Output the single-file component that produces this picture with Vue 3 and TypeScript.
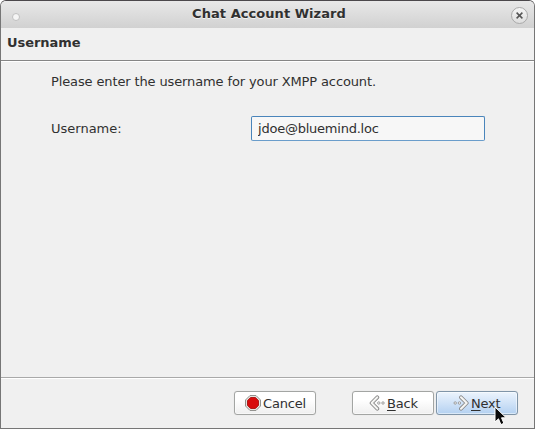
<script setup lang="ts">
import { ref } from 'vue'

const username = ref<string>('jdoe@bluemind.loc')
</script>

<template>
  <div class="window">
    <header class="titlebar">
      <span class="dot"></span>
      <span class="title">Chat Account Wizard</span>
      <button class="close" aria-label="Close">
        <svg width="9" height="9" viewBox="0 0 9 9"><path d="M1.6 1.6 7.4 7.4M7.4 1.6 1.6 7.4" stroke="#555" stroke-width="1.5" /></svg>
      </button>
    </header>
    <h1 class="heading">Username</h1>
    <main class="content">
      <p class="intro">Please enter the username for your XMPP account.</p>
      <div class="field">
        <label for="username">Username:</label>
        <input id="username" v-model="username" type="text" spellcheck="false" />
      </div>
    </main>
    <footer class="actions">
      <button class="btn cancel">
        <svg width="16" height="16" viewBox="0 0 16 16">
          <path d="M5 .5h6L15.5 5v6L11 15.5H5L.5 11V5z" fill="#e4e4e0" stroke="#93938f" />
          <path d="M5.6 2.5h4.8l3.1 3.1v4.8l-3.1 3.1H5.6l-3.1-3.1V5.6z" fill="#d80c0c" stroke="#a81010" stroke-width=".9" />
        </svg>
        <span class="label">Cancel</span>
      </button>
      <button class="btn back">
        <svg width="16" height="16" viewBox="0 0 16 16">
          <g fill="none" stroke-linecap="round" stroke-linejoin="round">
            <path d="M8.3 2.3 2.6 8l5.7 5.7" stroke="#858585" stroke-width="3.8" />
            <path d="M8.3 2.3 2.6 8l5.7 5.7" stroke="#f5f5f3" stroke-width="2" />
          </g>
          <g fill="#fff" stroke="#858585" stroke-width=".8"><circle cx="9.8" cy="8" r="1.2" /><circle cx="14" cy="8" r="1.2" /></g>
        </svg>
        <span class="label"><u>B</u>ack</span>
      </button>
      <button class="btn primary">
        <svg width="16" height="16" viewBox="0 0 16 16">
          <g fill="none" stroke-linecap="round" stroke-linejoin="round">
            <path d="M8 2.3 13.7 8 8 13.7" stroke="#858585" stroke-width="3.8" />
            <path d="M8 2.3 13.7 8 8 13.7" stroke="#f5f5f3" stroke-width="2.2" />
          </g>
          <g fill="#fff" stroke="#858585" stroke-width=".8"><circle cx="2.2" cy="8" r="1.2" /><circle cx="6.4" cy="8" r="1.2" /></g>
        </svg>
        <span class="label"><u>N</u>ext</span>
        <svg class="pointer" width="14" height="20" viewBox="0 0 14 20">
          <path d="M1 1v15l3.5-3.2 2.4 5.8 3-1.3-2.4-5.5h4.7z" fill="#0a0a0a" stroke="#fff" stroke-width="1" />
        </svg>
      </button>
    </footer>
  </div>
</template>

<style>
body {
  margin: 0;
  background: #fff;
}
</style>

<style scoped>
.window {
  box-sizing: border-box;
  width: 535px;
  height: 429px;
  display: flex;
  flex-direction: column;
  border: 1px solid #767676;
  border-top-color: #4b484b;
  border-radius: 6px 6px 0 0;
  background: #f0f0f0;
  color: #303030;
  font: 13px/16px "DejaVu Sans", sans-serif;
}
.titlebar {
  display: grid;
  grid-template-columns: 28px 1fr 25px;
  align-items: center;
  height: 27px;
  flex: none;
  border-radius: 5px 5px 0 0;
  background: linear-gradient(#e8e8e8, #d1d1d1);
}
.dot {
  box-sizing: border-box;
  width: 8px;
  height: 8px;
  margin: 4px 0 0 11px;
  border: 1px solid #c0c0c0;
  border-radius: 50%;
  background: #f5f5f5;
}
.title {
  text-align: center;
  font-weight: bold;
  letter-spacing: 0.05px;
  margin-top: -2px;
  text-shadow: 0 1px 0 #f2f2f2;
}
.close {
  box-sizing: border-box;
  display: flex;
  align-items: center;
  justify-content: center;
  width: 17px;
  height: 17px;
  margin: 1px 0 0 2px;
  padding: 0;
  border: 1px solid #aaa;
  border-radius: 50%;
  background: linear-gradient(#f5f5f5, #dedede);
}
.heading {
  box-sizing: border-box;
  height: 33px;
  flex: none;
  margin: 0;
  padding: 7px 6px 0;
  border-bottom: 1px solid #868686;
  font: bold 13px/16px "DejaVu Sans", sans-serif;
  letter-spacing: -0.05px;
}
.content {
  flex: 1;
  padding: 12px 49px 0 50px;
  border-top: 1px solid #fff;
}
.intro {
  margin: 0;
  letter-spacing: -0.125px;
}
.field {
  display: flex;
  align-items: center;
  justify-content: space-between;
  margin-top: 26px;
}
.field input {
  box-sizing: border-box;
  width: 234px;
  height: 25px;
  padding: 0 6px;
  border: 1px solid #4a85bb;
  border-bottom-color: #6a9dcb;
  border-radius: 2px;
  outline: none;
  background: #f7f7f7;
  color: #303030;
  font: 13px/16px "DejaVu Sans", sans-serif;
  letter-spacing: -0.23px;
}
.actions {
  box-sizing: border-box;
  display: flex;
  gap: 2px;
  justify-content: flex-end;
  height: 51px;
  flex: none;
  padding: 13px 16px 0 0;
  border-top: 1px solid #a9a9a9;
  box-shadow: inset 0 1px #fff;
}
.btn {
  position: relative;
  box-sizing: border-box;
  display: flex;
  align-items: center;
  gap: 2px;
  width: 82px;
  height: 24px;
  padding: 0 0 0 10px;
  border: 1px solid #a3a5a3;
  border-radius: 3px;
  background: linear-gradient(#fff 35%, #efefef);
  box-shadow: inset 0 0 0 1px rgba(255, 255, 255, 0.5), 0 0 1px rgba(0, 0, 0, 0.15);
  color: #303030;
  font: 13px/16px "DejaVu Sans", sans-serif;
  letter-spacing: -0.2px;
}
.label {
  padding-top: 1px;
}
.cancel {
  margin-right: 34px;
}
.back {
  padding-left: 16px;
}
.primary {
  padding-left: 16px;
  border-color: #8095a8;
  background: linear-gradient(#ecf4fd, #b4d1f1);
}
u {
  text-decoration: underline;
  text-underline-offset: 2px;
  text-decoration-thickness: 1px;
}
.pointer {
  position: absolute;
  left: 57px;
  top: 14px;
}
</style>
